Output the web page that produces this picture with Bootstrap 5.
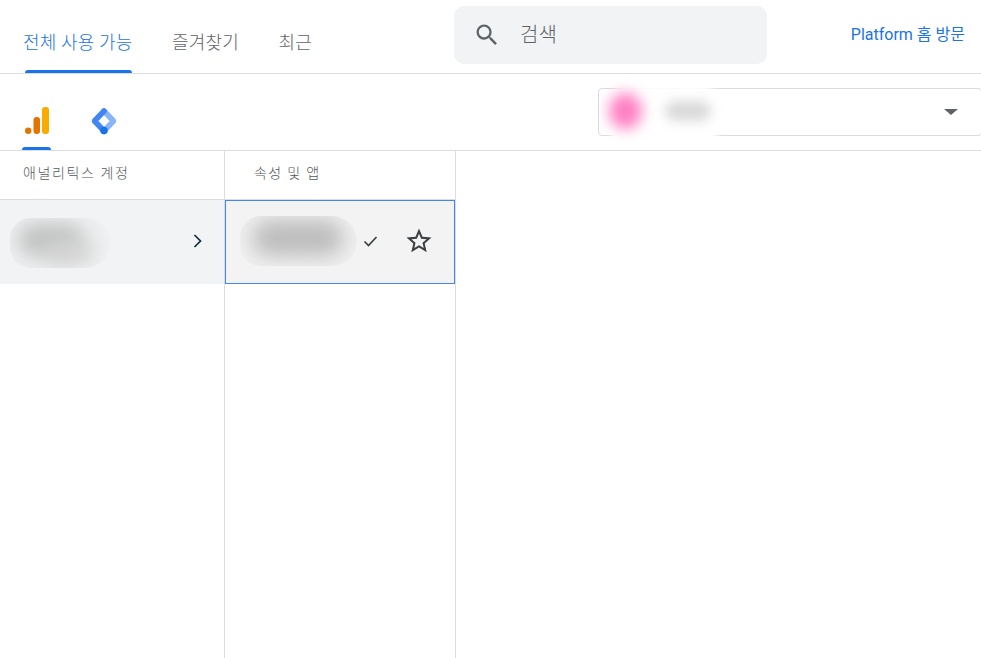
<!DOCTYPE html>
<html lang="ko">
<head>
<meta charset="utf-8">
<title>계정 선택</title>
<link href="https://cdn.jsdelivr.net/npm/bootstrap@5.3.0/dist/css/bootstrap.min.css" rel="stylesheet">
<style>
html,body{height:100%;overflow:hidden}
body{font-family:Roboto,"Noto Sans CJK KR",sans-serif;background:#fff;color:#5f6368;font-weight:300}
.shell{width:981px;height:658px;overflow:hidden}
.topbar{height:74px;border-bottom:1px solid #dadce0}
.tabset{padding-left:23px;gap:39.500px;width:454px;height:73px}
.tabitem{height:73px;font-size:18px;line-height:85px;color:#5f6368;text-decoration:none;position:relative;letter-spacing:.18px}
.tabitem.on{color:#1a73e8}
.tabitem.on::after{content:"";position:absolute;left:2px;right:1px;bottom:0;height:3px;background:#1a73e8;border-radius:3px 3px 0 0}
.searchbox{width:313px;height:58px;margin-top:6px;background:#f1f3f4;border-radius:10px;padding-left:19px;font-size:20px;gap:19px;color:#5f6368}
.visit{margin-left:auto;padding-right:16px;padding-top:25px;font-size:16px;line-height:20px;color:#1a73e8;text-decoration:none;font-weight:400}
.prodbar{height:77px;border-bottom:1px solid #dadce0}
.prodtab{width:29px;height:76px;margin-left:22px;position:relative;padding-top:33px;text-align:center}
.prodtab.on::after{content:"";position:absolute;left:0;right:0;bottom:0;height:3px;background:#1a73e8;border-radius:3px 3px 0 0}
.prodtab.second{margin-left:38px}
.picker{margin-left:auto;margin-right:-1px;margin-top:14px;width:384px;height:48px;border:1px solid #dadce0;border-radius:4px;position:relative;background:#fff}
.blob{position:absolute;display:block}
.pinkhalo{left:4px;top:-3px;width:122px;height:56px;background:#fff;filter:blur(2px);border-radius:24px}
.pinkdot{left:10px;top:4px;width:33px;height:36px;border-radius:50%;background:#ff7fc4;filter:blur(7px)}
.graytag{left:66px;top:12px;width:46px;height:20px;border-radius:10px;background:#d9d9d9;filter:blur(6px)}
.caret{position:absolute;right:23px;top:20px;width:0;height:0;border-left:7px solid transparent;border-right:7px solid transparent;border-top:6px solid #5f6368}
.cols{height:507px}
.colone{width:225px;border-right:1px solid #dadce0}
.coltwo{width:231px;border-right:1px solid #dadce0}
.colhead{height:49px;border-bottom:1px solid #dadce0;font-size:14px;line-height:45px;letter-spacing:1.350px;color:#54585c}
.colone .colhead{padding-left:23px;letter-spacing:1.600px}
.coltwo .colhead{padding-left:29px}
.rowone{height:84px;background:#f1f3f4;position:relative}
.rowtwo{height:84px;background:#f3f3f3;border:1px solid #4285f4;position:relative}
.clip{position:absolute;display:block;overflow:hidden;border-radius:25px 30px 30px 25px}
.acctclip{left:10px;top:18px;width:100px;height:50px;background:#eff0f1}
.propclip{left:14px;top:15px;width:117px;height:50px;background:#f0f0f0}
.acctcore{left:8px;top:6px;width:66px;height:32px;border-radius:16px;background:#bfc0c0;filter:blur(10px)}
.accttail{left:34px;top:24px;width:50px;height:20px;border-radius:10px;background:#d4d4d4;filter:blur(9px)}
.propcore{left:12px;top:4px;width:92px;height:36px;border-radius:18px;background:#bdbdbd;filter:blur(10px)}
.chev{position:absolute;left:192px;top:33px}
.tick{position:absolute;left:136px;top:32px}
.starico{position:absolute;left:178px;top:25px}
</style>
</head>
<body>
<div class="shell d-flex flex-column">
  <div class="topbar d-flex">
    <nav class="tabset d-flex">
      <a class="tabitem on" href="#">전체 사용 가능</a>
      <a class="tabitem" href="#">즐겨찾기</a>
      <a class="tabitem" href="#">최근</a>
    </nav>
    <div class="searchbox d-flex align-items-center">
      <svg width="28" height="28" viewBox="0 0 24 24" fill="#5f6368"><path d="M15.5 14h-.79l-.28-.27A6.47 6.47 0 0 0 16 9.5 6.5 6.5 0 1 0 9.500 16c1.610 0 3.090-.59 4.230-1.570l.27.28v.79l5 4.990L20.490 19l-4.990-5zm-6 0C7.010 14 5 11.990 5 9.500S7.010 5 9.500 5 14 7.010 14 9.500 11.990 14 9.500 14z"/></svg>
      <span>검색</span>
    </div>
    <a class="visit" href="#">Platform 홈 방문</a>
  </div>
  <div class="prodbar d-flex">
    <div class="prodtab on">
      <svg width="24" height="27" viewBox="0 0 24 27"><rect x="17" y="0" width="7" height="27" rx="3" fill="#f9ab00"/><rect x="8.500" y="10" width="6.500" height="17" rx="3" fill="#e37400"/><circle cx="3.200" cy="23.800" r="3.200" fill="#e37400"/></svg>
    </div>
    <div class="prodtab second">
      <svg width="28" height="28" viewBox="0 0 28 28" fill="none" stroke-linecap="round" stroke-linejoin="round">
        <path d="M14 4L23.500 14 14 24" stroke="#8ab4f8" stroke-width="5.500"/>
        <path d="M14 4L4.500 14 14 24" stroke="#4285f4" stroke-width="5.500"/>
        <circle cx="14" cy="23.600" r="3.800" fill="#1a73e8"/>
      </svg>
    </div>
    <div class="picker">
      <span class="blob pinkhalo"></span>
      <span class="blob pinkdot"></span>
      <span class="blob graytag"></span>
      <span class="caret"></span>
    </div>
  </div>
  <div class="cols d-flex">
    <section class="colone">
      <div class="colhead">애널리틱스 계정</div>
      <div class="rowone overflow-hidden">
        <span class="clip acctclip"><span class="blob acctcore"></span><span class="blob accttail"></span></span>
        <svg class="chev" width="12" height="16" viewBox="0 0 12 16" fill="none"><path d="M2.500 2l6 6-6 6" stroke="#0d2a45" stroke-width="1.700"/></svg>
      </div>
    </section>
    <section class="coltwo">
      <div class="colhead">속성 및 앱</div>
      <div class="rowtwo">
        <span class="clip propclip"><span class="blob propcore"></span></span>
        <svg class="tick" width="18" height="16" viewBox="0 0 18 16" fill="none"><path d="M2.500 8.500l4 4 8-8.500" stroke="#3c4043" stroke-width="1.700"/></svg>
        <svg class="starico" width="30" height="30" viewBox="0 0 24 24" fill="#3c4043"><path d="M22 9.240l-7.190-.62L12 2 9.190 8.630 2 9.240l5.460 4.730L5.820 21 12 17.270 18.180 21l-1.630-7.030L22 9.240zM12 15.400l-3.760 2.270 1-4.280-3.320-2.880 4.380-.38L12 6.100l1.710 4.040 4.380.38-3.320 2.880 1 4.280L12 15.400z"/></svg>
      </div>
    </section>
  </div>
</div>
<script src="https://cdn.jsdelivr.net/npm/bootstrap@5.3.0/dist/js/bootstrap.bundle.min.js"></script>
</body>
</html>
